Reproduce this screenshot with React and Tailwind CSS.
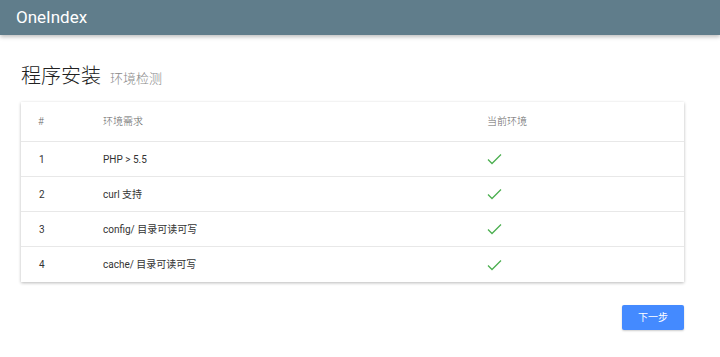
import React from 'react';

const rows = [
  { id: 1, label: 'PHP > 5.5' },
  { id: 2, label: 'curl 支持' },
  { id: 3, label: 'config/ 目录可读可写' },
  { id: 4, label: 'cache/ 目录可读可写' },
];

const Check = () => (
  <svg width="15" height="12" viewBox="0 0 15 12" fill="none">
    <path d="M1 6.5 L5 10.5 L14 1.5" stroke="#4caf50" strokeWidth="1.3" />
  </svg>
);

export default function App() {
  return (
    <div className="w-[720px] h-[357px] bg-white overflow-hidden font-['Roboto','Noto_Sans_CJK_SC',sans-serif]">
      <header className="h-[35px] bg-[#607d8b] flex items-center px-4 shadow-[0_2px_4px_rgba(0,0,0,0.25)]">
        <span className="text-white text-[17px]">OneIndex</span>
      </header>

      <div className="px-[21px] pt-[27px]">
        <h1 className="flex items-baseline gap-[9px] text-[20px] font-light text-[#212121] leading-[28px]">
          程序安装
          <small className="text-[13px] font-light text-[#888]">环境检测</small>
        </h1>

        <div className="mt-[9px] w-[663px] bg-white shadow-[0_1px_3px_rgba(0,0,0,0.28)]">
          <div className="flex items-center h-[40px] text-[10px] font-light text-[#666] border-b border-[#e8e8e8]">
            <div className="w-[82px] pl-[17px]">#</div>
            <div className="w-[384px]">环境需求</div>
            <div>当前环境</div>
          </div>
          {rows.map((r, i) => (
            <div
              key={r.id}
              className={`flex items-center h-[35px] text-[10px] text-[#333] ${i < rows.length - 1 ? 'border-b border-[#e8e8e8]' : ''}`}
            >
              <div className="w-[82px] pl-[18px]">{r.id}</div>
              <div className="w-[384px]">{r.label}</div>
              <div><Check /></div>
            </div>
          ))}
        </div>

        <div className="flex justify-end w-[663px] mt-[23px]">
          <button className="w-[62px] h-[25px] bg-[#448aff] text-white text-[10px] rounded-[2px] shadow-[0_1px_2px_rgba(0,0,0,0.2)]">
            下一步
          </button>
        </div>
      </div>
    </div>
  );
}
